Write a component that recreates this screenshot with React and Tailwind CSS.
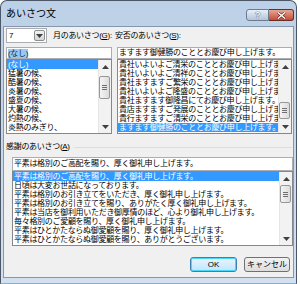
import React from "react";

const monthItems = [
  "(なし)",
  "猛暑の候、",
  "酷暑の候、",
  "炎暑の候、",
  "盛夏の候、",
  "大暑の候、",
  "灼熱の候、",
  "炎熱のみぎり、",
];

const safetyItems = [
  "貴社いよいよご清栄のこととお慶び申し上げます。",
  "貴社いよいよご清祥のこととお慶び申し上げます。",
  "貴社ますますご繁栄のこととお慶び申し上げます。",
  "貴社いよいよご隆盛のこととお慶び申し上げます。",
  "貴社ますます御隆昌にてお慶び申し上げます。",
  "貴店ますますご発展のこととお慶び申し上げます。",
  "貴行ますますご清栄のこととお慶び申し上げます。",
  "ますます御健勝のこととお慶び申し上げます。",
];

const thanksItems = [
  "平素は格別のご高配を賜り、厚く御礼申し上げます。",
  "日頃は大変お世話になっております。",
  "平素は格別のお引き立てをいただき、厚く御礼申し上げます。",
  "平素は格別のお引き立てを賜り、ありがたく厚く御礼申し上げます。",
  "平素は当店を御利用いただき御厚情のほど、心より御礼申し上げます。",
  "毎々格別のご愛顧を賜り、厚く御礼申し上げます。",
  "平素はひとかたならぬ御愛顧を賜り、厚く御礼申し上げます。",
  "平素はひとかたならぬ御愛顧を賜り、ありがとうございます。",
];

function Arrow({ dir }) {
  return (
    <svg width="7" height="4" viewBox="0 0 7 4">
      <path
        d={dir === "up" ? "M0 4 L3.5 0 L7 4 Z" : "M0 0 L3.5 4 L7 0 Z"}
        fill="#404040"
      />
    </svg>
  );
}

function ScrollBar({ thumbTop, thumbHeight }) {
  return (
    <div className="w-[13px] h-full shrink-0 flex flex-col bg-[#f2f2f2] border-l border-[#e6e6e6]">
      <div className="h-[13px] shrink-0 flex items-center justify-center">
        <Arrow dir="up" />
      </div>
      <div className="flex-1 relative">
        {/* thumb sits over the track */}
        <div
          className="absolute left-0 right-px flex flex-col items-center justify-center gap-px rounded-[2px] border border-[#979797] bg-gradient-to-r from-[#f4f4f4] to-[#dcdcdc]"
          style={{ top: thumbTop, height: thumbHeight }}
        >
          <div className="w-[5px] h-px bg-[#6f6f6f]" />
          <div className="w-[5px] h-px bg-[#6f6f6f]" />
          <div className="w-[5px] h-px bg-[#6f6f6f]" />
        </div>
      </div>
      <div className="h-[13px] shrink-0 flex items-center justify-center">
        <Arrow dir="down" />
      </div>
    </div>
  );
}

function ListBox({ items, selected, height, thumbTop, thumbHeight }) {
  return (
    <div
      className="flex border border-[#828790] bg-white"
      style={{ height }}
    >
      <div className="flex-1 min-w-0 overflow-hidden">
        {items.map((t, i) => (
          <div
            key={i}
            className={`h-[9px] leading-[9px] whitespace-nowrap pl-px ${
              i === selected ? "bg-[#3399ff] text-white" : "text-black"
            }`}
          >
            {t}
          </div>
        ))}
      </div>
      <ScrollBar thumbTop={thumbTop} thumbHeight={thumbHeight} />
    </div>
  );
}

function TextField({ children, h }) {
  return (
    <div
      className="flex items-center border border-[#abadb3] bg-white pl-px overflow-hidden whitespace-nowrap"
      style={{ height: h }}
    >
      {children}
    </div>
  );
}

export default function App() {
  return (
    <div className="w-[300px] h-[284px] bg-white text-[8px] tracking-[-0.3px] font-['Liberation_Sans','Noto_Sans_CJK_JP',sans-serif]">
      <div className="w-[297px] h-[284px] flex flex-col rounded-t-[7px] border border-[#4b5766] border-b-[#7fb2d8] bg-gradient-to-b from-[#bcd0e7] to-[#d3e0ef]">
        {/* title bar */}
        <div className="h-[25px] shrink-0 flex items-start">
          <div className="pl-[5px] pt-[8px] text-[10px] leading-[10px] tracking-normal text-black">
            あいさつ文
          </div>
          <div className="ml-auto mr-[2px] mt-[8px] flex">
            <div className="w-[23px] h-[12px] rounded-l-[3px] border border-[#6b7c90] bg-gradient-to-b from-[#e9eff7] to-[#b3c4d9] flex items-center justify-center text-[9px] leading-[9px] font-bold text-white [text-shadow:0_0_1px_#34465c,0_0_1px_#34465c]">
              ?
            </div>
            <div className="w-[25px] h-[12px] rounded-r-[3px] border border-l-0 border-[#6d2b22] bg-gradient-to-b from-[#e8a594] to-[#c24b33] flex items-center justify-center">
              <svg width="9" height="7" viewBox="0 0 9 7">
                <path d="M1 0.5 L8 6.5 M8 0.5 L1 6.5" stroke="#5a1c14" strokeWidth="2.6" />
                <path d="M1 0.5 L8 6.5 M8 0.5 L1 6.5" stroke="#ffffff" strokeWidth="1.5" />
              </svg>
            </div>
          </div>
        </div>

        {/* client area */}
        <div className="flex-1 ml-[2px] mr-[2px] mb-[5px] border border-[#8597ab] bg-[#f0f0f0] pl-[2px] pt-px flex flex-col">
          <div className="grid grid-cols-[106px_175px] gap-x-[5px]">
            <div className="flex items-center h-[15px]">
              <div className="w-[41px] h-[15px] flex border border-[#abadb3] bg-white">
                <div className="flex-1 pl-[2px] leading-[13px]">7</div>
                <div className="w-[11px] my-px mr-px flex items-center justify-center rounded-[2px] border border-[#8e8f8f] bg-gradient-to-b from-[#f2f2f2] to-[#d5d5d5]">
                  <Arrow dir="down" />
                </div>
              </div>
              <div className="ml-[6px] whitespace-nowrap">
                月のあいさつ(<span className="underline">G</span>):
              </div>
            </div>
            <div className="flex items-center h-[15px] -ml-[2px] whitespace-nowrap">
              安否のあいさつ(<span className="underline">S</span>):
            </div>

            <div className="mt-[4px] flex flex-col">
              <TextField h={12}>
                <span className="bg-[#99c9f5] text-[#10325c] leading-[9px]">(なし)</span>
              </TextField>
              <ListBox
                items={monthItems}
                selected={0}
                height={75}
                thumbTop={3}
                thumbHeight={23}
              />
            </div>
            <div className="mt-[4px] flex flex-col">
              <TextField h={12}>ますます御健勝のこととお慶び申し上げます。</TextField>
              <ListBox
                items={safetyItems}
                selected={7}
                height={75}
                thumbTop={29}
                thumbHeight={17}
              />
            </div>
          </div>

          <div className="mt-[8px] flex items-center h-[10px] pr-px">
            <div className="whitespace-nowrap">
              感謝のあいさつ(<span className="underline">A</span>)
            </div>
            <div className="flex-1 ml-[4px] h-px bg-[#d5dfe5]" />
          </div>

          <div className="mt-[5px] ml-[6px] flex flex-col">
            <TextField h={14}>平素は格別のご高配を賜り、厚く御礼申し上げます。</TextField>
            <ListBox
              items={thanksItems}
              selected={0}
              height={75}
              thumbTop={0}
              thumbHeight={18}
            />
          </div>

          <div className="mt-[11px] mr-[3px] flex justify-end gap-[7px] tracking-normal">
            <div className="w-[47px] h-[15px] rounded-[3px] border border-[#3c7fb1] bg-gradient-to-b from-[#eaf6fd] to-[#bee6fd] shadow-[inset_0_0_0_1px_#48d8fb] flex items-center justify-center">
              OK
            </div>
            <div className="w-[46px] h-[15px] rounded-[3px] border border-[#707070] bg-gradient-to-b from-[#f2f2f2] to-[#dddddd] flex items-center justify-center">
              キャンセル
            </div>
          </div>
        </div>
      </div>
    </div>
  );
}
